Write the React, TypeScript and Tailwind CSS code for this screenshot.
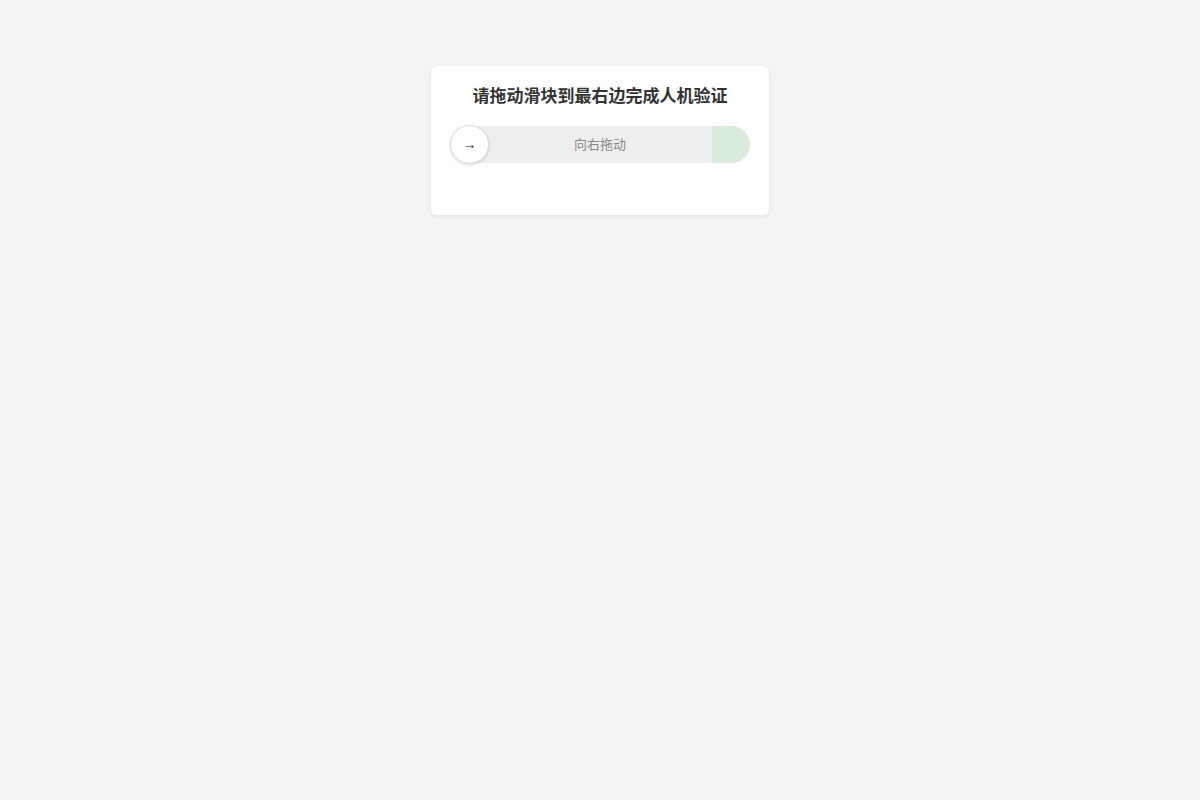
export default function App() {
  return (
    <div
      className="min-h-screen bg-[#f4f4f4] flex justify-center pt-[66px]"
      style={{ fontFamily: '"Liberation Sans", "Noto Sans CJK SC", sans-serif' }}
    >
      <div className="w-[338px] h-[149px] bg-white rounded-md shadow-[0_1px_4px_rgba(0,0,0,0.08)] px-[19px] pt-[20px]">
        <h1 className="text-center text-[17px] leading-[22px] font-bold text-[#333]">
          请拖动滑块到最右边完成人机验证
        </h1>
        <div className="relative mt-[18px] h-[37px] rounded-full bg-[#eeeeee] flex items-center justify-center">
          <span className="text-[13px] text-[#888]">向右拖动</span>
          <div className="absolute right-0 top-0 h-[37px] w-[38px] rounded-r-full bg-[#d9ebdb]" />
          <div className="absolute left-0 top-[-1px] w-[39px] h-[39px] rounded-full bg-white border border-[#ddd] shadow-[0_1px_3px_rgba(0,0,0,0.15)] flex items-center justify-center text-[14px] text-[#222]">
            →
          </div>
        </div>
      </div>
    </div>
  );
}
